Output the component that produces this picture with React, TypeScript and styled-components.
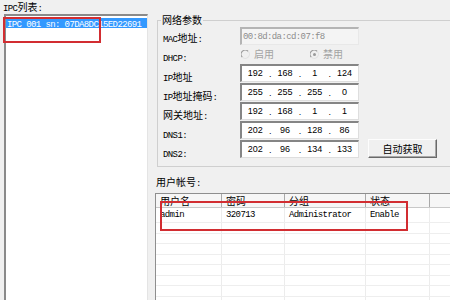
import React from "react";
import styled, { createGlobalStyle } from "styled-components";

const GlobalStyle = createGlobalStyle`
  html, body {
    margin: 0;
    padding: 0;
    background: #f0f0f0;
  }
  body {
    width: 450px;
    height: 300px;
    overflow: hidden;
    font-family: "Liberation Mono", "Noto Sans CJK SC", monospace;
    color: #000;
  }
`;

// 中文 / 英文分开字体
const Han = styled.span`
  font-family: "Noto Sans CJK SC", sans-serif;
  font-size: 10px;
`;

const Lat = styled.span`
  font-family: "Liberation Mono", monospace;
  font-size: 9px;
  letter-spacing: -0.6px;
`;

const CJK = /[\u3000-\u9fff\uff00-\uffef]/;

const mixText = (text: string) =>
  text
    .split(/([\u3000-\u9fff\uff00-\uffef]+)/)
    .filter(Boolean)
    .map((part, i) =>
      CJK.test(part) ? <Han key={i}>{part}</Han> : <Lat key={i}>{part}</Lat>
    );

const Window = styled.div`
  position: relative;
  display: grid;
  grid-template-columns: 150px 300px;
  width: 450px;
  height: 300px;
  overflow: hidden;
`;

const LeftPane = styled.div`
  display: flex;
  flex-direction: column;
  padding: 1px 2px 0 4px;
  min-height: 0;
`;

const PaneLabel = styled.div`
  line-height: 12px;
  height: 12px;
  margin-left: -1px;
  white-space: nowrap;
`;

const ListBox = styled.div`
  margin-top: 1px;
  flex: 1;
  background: #fff;
  border-style: solid;
  border-width: 2px 1px 0 2px;
  border-color: #8a8a8a #e4e4e4 #e4e4e4 #8a8a8a;
  padding: 2px 0 0 0;
`;

const ListItem = styled.div<{ $selected?: boolean }>`
  height: 10px;
  line-height: 10px;
  padding-left: 1px;
  white-space: nowrap;
  color: ${(p) => (p.$selected ? "#fff" : "#000")};
  background: ${(p) => (p.$selected ? "#3399ff" : "transparent")};
`;

const RightPane = styled.div`
  display: flex;
  flex-direction: column;
  min-width: 0;
`;

const GroupBox = styled.fieldset`
  margin: 14px 0 0 7px;
  width: 310px;
  box-sizing: border-box;
  border: 1px solid #cfcfcf;
  padding: 1px 0 7px 5px;
`;

const Legend = styled.legend`
  line-height: 12px;
  padding: 0 1px;
  margin-left: -2px;
`;

const FormGrid = styled.div`
  display: grid;
  grid-template-columns: 77px 119px 78px;
  grid-template-rows: 19px 18px 19px 19px 19px 19px 19px;
  align-items: start;
`;

const FieldLabel = styled.div<{ $pad?: number }>`
  line-height: 12px;
  padding-top: ${(p) => p.$pad ?? 7}px;
  white-space: nowrap;
`;

const Field = styled.div<{ $disabled?: boolean }>`
  height: 18px;
  box-sizing: border-box;
  border-style: solid;
  border-width: 2px 1px 1px 2px;
  border-color: ${(p) =>
    p.$disabled ? "#b4b4b4 #e8e8e8 #e8e8e8 #b4b4b4" : "#858585 #dedede #dedede #858585"};
  background: ${(p) => (p.$disabled ? "#f4f4f4" : "#fff")};
  display: flex;
  align-items: center;
  padding-left: ${(p) => (p.$disabled ? 1 : 0)}px;
  color: ${(p) => (p.$disabled ? "#8c8c8c" : "#000")};
  white-space: nowrap;
  overflow: hidden;
`;

const Octet = styled.span`
  flex: 1;
  text-align: center;
  font-family: "Liberation Sans", sans-serif;
  font-size: 9px;
  line-height: 12px;
  margin-top: -2px;
`;

const Dot = styled.span`
  width: 3px;
  text-align: center;
  font-family: "Liberation Sans", sans-serif;
  font-size: 9px;
  line-height: 12px;
`;

const RadioRow = styled.div`
  display: flex;
  align-items: center;
  height: 16px;
  padding-left: 1px;
  color: #a3a3a3;
`;

const RadioOption = styled.div<{ $width?: number }>`
  display: flex;
  align-items: center;
  gap: 4px;
  width: ${(p) => (p.$width ? `${p.$width}px` : "auto")};
  line-height: 12px;
  white-space: nowrap;
`;

const Button = styled.div`
  width: 69px;
  height: 19px;
  margin-left: 9px;
  margin-top: -1px;
  box-sizing: border-box;
  border: 1px solid;
  border-color: #fdfdfd #6a6a6a #6a6a6a #fdfdfd;
  box-shadow: inset -1px -1px #a8a8a8;
  background: #f0f0f0;
  display: flex;
  align-items: center;
  justify-content: center;
  line-height: 12px;
`;

const SectionLabel = styled.div`
  margin: 9px 0 0 6px;
  line-height: 12px;
  height: 12px;
  white-space: nowrap;
`;

const Table = styled.div`
  margin: 5px 0 0 5px;
  width: 310px;
  flex: 1;
  background: #fff;
  border: 1px solid #8e8e8e;
  border-right: none;
  border-bottom: none;
  overflow: hidden;
`;

const Row = styled.div<{ $height: number; $header?: boolean }>`
  display: grid;
  grid-template-columns: 66px 63px 81px 64px 1fr;
  height: ${(p) => p.$height}px;
  box-sizing: border-box;
  background: ${(p) => (p.$header ? "#f6f6f6" : "#fff")};
  border-bottom: 1px solid ${(p) => (p.$header ? "#c8c8c8" : "#eeeeee")};
`;

const Cell = styled.div<{ $header?: boolean }>`
  border-right: 1px solid ${(p) => (p.$header ? "#a9a9a9" : "#ececec")};
  padding-left: 4px;
  display: flex;
  align-items: center;
  white-space: nowrap;
  overflow: hidden;
  line-height: 12px;
`;

const Marker = styled.div<{ $x: number; $y: number; $w: number; $h: number }>`
  position: absolute;
  left: ${(p) => p.$x}px;
  top: ${(p) => p.$y}px;
  width: ${(p) => p.$w}px;
  height: ${(p) => p.$h}px;
  box-sizing: border-box;
  border: 2px solid #d22d31;
  pointer-events: none;
`;

const RadioIcon: React.FC<{ checked?: boolean }> = ({ checked }) => (
  <svg width="9" height="9" viewBox="0 0 9 9">
    <path d="M1.3 7.2 A3.8 3.8 0 0 1 7.2 1.3" fill="none" stroke="#9a9a9a" strokeWidth="1.1" />
    <path d="M7.2 1.3 A3.8 3.8 0 0 1 1.3 7.2" fill="none" stroke="#e2e2e2" strokeWidth="1.1" />
    {checked && <circle cx="4.5" cy="4.5" r="1.5" fill="#9a9a9a" />}
  </svg>
);

const IpField: React.FC<{ value: string }> = ({ value }) => {
  const parts = value.split(".");
  return (
    <Field>
      {parts.map((p, i) => (
        <React.Fragment key={i}>
          {i > 0 && <Dot>.</Dot>}
          <Octet>{p}</Octet>
        </React.Fragment>
      ))}
    </Field>
  );
};

const ipRows = [
  { label: "IP地址", value: "192.168.1.124" },
  { label: "IP地址掩码:", value: "255.255.255.0" },
  { label: "网关地址:", value: "192.168.1.1" },
  { label: "DNS1:", value: "202.96.128.86" },
  { label: "DNS2:", value: "202.96.134.133" },
];

const columns = ["用户名", "密码", "分组", "状态", ""];
const users = [["admin", "320713", "Administrator", "Enable", ""]];

const App: React.FC = () => {
  const emptyRows = Array.from({ length: 9 });

  return (
    <>
      <GlobalStyle />
      <Window>
        <LeftPane>
          <PaneLabel>{mixText("IPC列表:")}</PaneLabel>
          <ListBox>
            <ListItem $selected>
              <Lat>IPC 001 sn: 07DA8DC15ED22691</Lat>
            </ListItem>
          </ListBox>
        </LeftPane>

        <RightPane>
          <GroupBox>
            <Legend>{mixText("网络参数")}</Legend>
            <FormGrid>
              <FieldLabel $pad={5}>{mixText("MAC地址:")}</FieldLabel>
              <Field $disabled>
                <Lat>00:8d:da:cd:07:f8</Lat>
              </Field>
              <div />

              <FieldLabel $pad={5}>{mixText("DHCP:")}</FieldLabel>
              <RadioRow>
                <RadioOption $width={69}>
                  <RadioIcon />
                  {mixText("启用")}
                </RadioOption>
                <RadioOption>
                  <RadioIcon checked />
                  {mixText("禁用")}
                </RadioOption>
              </RadioRow>
              <div />

              {ipRows.map((row, idx) => (
                <React.Fragment key={row.label}>
                  <FieldLabel>{mixText(row.label)}</FieldLabel>
                  <IpField value={row.value} />
                  {idx === ipRows.length - 1 ? (
                    <Button>{mixText("自动获取")}</Button>
                  ) : (
                    <div />
                  )}
                </React.Fragment>
              ))}
            </FormGrid>
          </GroupBox>

          <SectionLabel>{mixText("用户帐号:")}</SectionLabel>
          <Table>
            <Row $height={14} $header>
              {columns.map((c, i) => (
                <Cell $header key={i}>
                  {mixText(c)}
                </Cell>
              ))}
            </Row>
            {users.map((u, idx) => (
              <Row $height={15} key={idx}>
                {u.map((v, i) => (
                  <Cell key={i}>
                    <Lat>{v}</Lat>
                  </Cell>
                ))}
              </Row>
            ))}
            {emptyRows.map((_, idx) => (
              <Row $height={10.5} key={"e" + idx}>
                {columns.map((_c, i) => (
                  <Cell key={i} />
                ))}
              </Row>
            ))}
          </Table>
        </RightPane>

        {/* 红框标注 */}
        <Marker $x={3} $y={17} $w={98} $h={26} />
        <Marker $x={160} $y={201} $w={248} $h={30} />
      </Window>
    </>
  );
};

export default App;
